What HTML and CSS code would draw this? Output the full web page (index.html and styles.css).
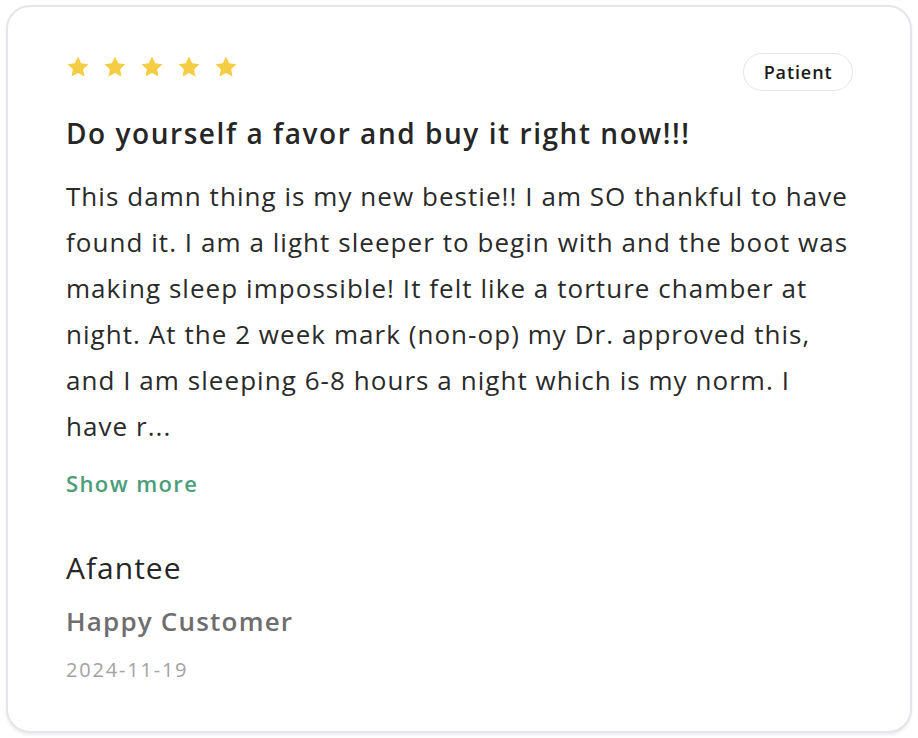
FILE: index.html
```html
<!DOCTYPE html>
<html lang="en">
<head>
<meta charset="utf-8">
<title>Review</title>
<link rel="stylesheet" href="styles.css">
</head>
<body>
<article class="card">
  <header class="card-head">
    <div class="stars" aria-label="5 stars">
      <svg class="star" viewBox="0 0 24 24"><path d="M12 1.6l3.2 6.7 7.3.9-5.4 5 1.4 7.3L12 17.9l-6.5 3.6 1.4-7.3-5.4-5 7.3-.9z"/></svg>
      <svg class="star" viewBox="0 0 24 24"><path d="M12 1.6l3.2 6.7 7.3.9-5.4 5 1.4 7.3L12 17.9l-6.5 3.6 1.4-7.3-5.4-5 7.3-.9z"/></svg>
      <svg class="star" viewBox="0 0 24 24"><path d="M12 1.6l3.2 6.7 7.3.9-5.4 5 1.4 7.3L12 17.9l-6.5 3.6 1.4-7.3-5.4-5 7.3-.9z"/></svg>
      <svg class="star" viewBox="0 0 24 24"><path d="M12 1.6l3.2 6.7 7.3.9-5.4 5 1.4 7.3L12 17.9l-6.5 3.6 1.4-7.3-5.4-5 7.3-.9z"/></svg>
      <svg class="star" viewBox="0 0 24 24"><path d="M12 1.6l3.2 6.7 7.3.9-5.4 5 1.4 7.3L12 17.9l-6.5 3.6 1.4-7.3-5.4-5 7.3-.9z"/></svg>
    </div>
    <span class="badge">Patient</span>
  </header>
  <h2 class="title">Do yourself a favor and buy it right now!!!</h2>
  <p class="body">This damn thing is my new bestie!! I am SO thankful to have found it. I am a light sleeper to begin with and the boot was making sleep impossible! It felt like a torture chamber at night. At the 2 week mark (non-op) my Dr. approved this, and I am sleeping 6-8 hours a night which is my norm. I have r...</p>
  <a class="more" href="#">Show more</a>
  <div class="author">
    <div class="name">Afantee</div>
    <div class="role">Happy Customer</div>
    <div class="date">2024-11-19</div>
  </div>
</article>
</body>
</html>
```
FILE: styles.css
```css
* { box-sizing: border-box; }
html, body { margin: 0; background: #ffffff; }
body { font-family: "Open Sans", "Lato", sans-serif; color: #262626; }

.card {
  margin: 5px 6px 5px 6px;
  height: 728px;
  border: 2px solid #e6e6ea;
  border-radius: 24px;
  box-shadow: 0 2px 3px rgba(0, 0, 0, 0.08);
  padding: 46px 57px 0 58px;
  background: #fff;
}

.card-head {
  display: flex;
  justify-content: space-between;
  align-items: flex-start;
}

.stars { display: flex; gap: 13px; margin-top: 2px; }
.star { width: 24px; height: 24px; fill: #f5cd45; }

.badge {
  padding: 0 19.5px;
  height: 38px;
  line-height: 36px;
  border: 1px solid #e6e6e6;
  border-radius: 19px;
  font-size: 18px;
  font-weight: 600;
  letter-spacing: 0.9px;
  color: #1b1b1b;
}

.title {
  margin: 24px 0 0;
  font-size: 28px;
  line-height: 36px;
  font-weight: 600;
  letter-spacing: 1.55px;
  color: #262626;
}

.body {
  margin: 22px 0 0;
  font-size: 26px;
  line-height: 46px;
  font-weight: 400;
  letter-spacing: 1.05px;
  color: #2a2a2a;
}

.more {
  display: block;
  margin-top: 19px;
  font-size: 22px;
  line-height: 30px;
  font-weight: 600;
  letter-spacing: 1.4px;
  color: #4b9e79;
  text-decoration: none;
}

.author { margin-top: 50px; }
.name { font-size: 30px; line-height: 40px; font-weight: 400; letter-spacing: 1px; color: #262626; }
.role { margin-top: 15px; font-size: 26px; line-height: 36px; font-weight: 600; letter-spacing: 1.2px; color: #6e6e6e; }
.date { margin-top: 17px; font-size: 20px; line-height: 28px; letter-spacing: 1.8px; color: #a3a3a3; }
```
